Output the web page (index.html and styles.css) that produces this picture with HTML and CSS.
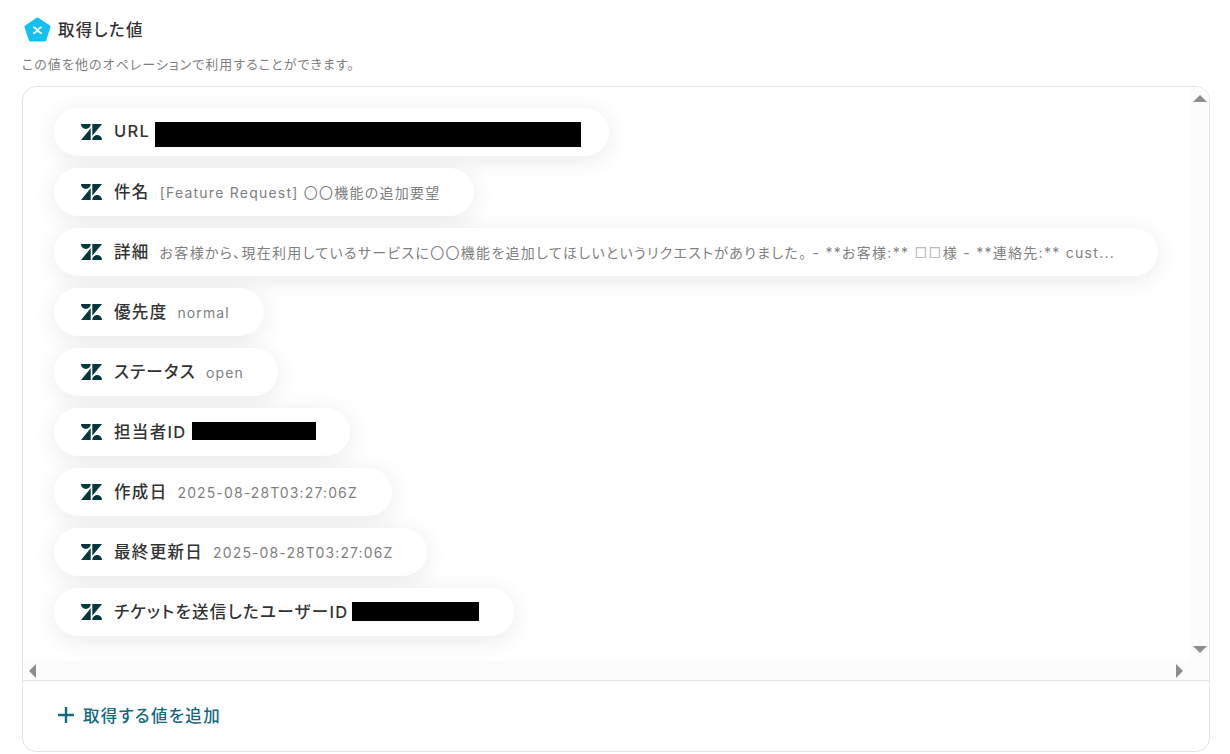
FILE: index.html
```html
<!DOCTYPE html>
<html lang="ja">
<head>
  <meta charset="UTF-8" />
  <title>取得した値</title>
  <link rel="stylesheet" href="styles.css">
</head>
<body>
  <svg class="defs" width="0" height="0">
    <symbol id="zd" viewBox="0 2.9 24 18.2">
      <path d="M12.914 2.904V16.29L24 2.905H12.914zM0 2.906C0 5.966 2.483 8.45 5.543 8.45s5.542-2.484 5.543-5.544H0zm11.086 4.807L0 21.096h11.086V7.713zm7.37 7.84c-3.063 0-5.542 2.48-5.542 5.543H24c0-3.06-2.48-5.543-5.543-5.543z"/>
    </symbol>
  </svg>

  <div class="heading">
    <svg class="logo" viewBox="0 0 26 24">
      <polygon class="logo-shape" points="13,2 24,9.5 20,22 6,22 2,9.5"/>
      <path class="logo-x" d="M9.5 10 C11 10.3 12 11.5 13 12.7 C14 13.9 15 15.2 16.5 15.5 M16.5 10 C15 10.3 14 11.5 13 12.7 C12 13.9 11 15.2 9.5 15.5"/>
    </svg>
    <h2>取得した値</h2>
  </div>
  <p class="note">この値を他のオペレーションで利用することができます。</p>

  <div class="card">
    <div class="scroller">
      <div class="rows">
        <div class="chip"><svg class="zd"><use href="#zd"/></svg><span class="label">URL</span><span class="mask mask-url"></span></div>
        <div class="chip"><svg class="zd"><use href="#zd"/></svg><span class="label">件名</span><span class="value value-mixed">[Feature Request] 〇〇機能の追加要望</span></div>
        <div class="chip"><svg class="zd"><use href="#zd"/></svg><span class="label">詳細</span><span class="value value-long">お客様から、現在利用しているサービスに〇〇機能を追加してほしいというリクエストがありました。 - **お客様:** <span class="tofu">□□</span>様 - **連絡先:** cust...</span></div>
        <div class="chip"><svg class="zd"><use href="#zd"/></svg><span class="label">優先度</span><span class="value">normal</span></div>
        <div class="chip"><svg class="zd"><use href="#zd"/></svg><span class="label">ステータス</span><span class="value">open</span></div>
        <div class="chip"><svg class="zd"><use href="#zd"/></svg><span class="label">担当者ID</span><span class="mask mask-id"></span></div>
        <div class="chip"><svg class="zd"><use href="#zd"/></svg><span class="label">作成日</span><span class="value">2025-08-28T03:27:06Z</span></div>
        <div class="chip"><svg class="zd"><use href="#zd"/></svg><span class="label">最終更新日</span><span class="value">2025-08-28T03:27:06Z</span></div>
        <div class="chip"><svg class="zd"><use href="#zd"/></svg><span class="label">チケットを送信したユーザーID</span><span class="mask mask-user"></span></div>
      </div>
      <div class="vbar">
        <span class="arrow arrow-up"></span>
        <span class="arrow arrow-down"></span>
      </div>
    </div>
    <div class="hbar">
      <span class="arrow arrow-left"></span>
      <span class="arrow arrow-right"></span>
    </div>
    <div class="footer">
      <svg class="plus" viewBox="0 0 16 16"><path d="M8 0v16M0 8h16"/></svg>
      <span>取得する値を追加</span>
    </div>
  </div>
</body>
</html>
```

FILE: styles.css
```css
* {
  box-sizing: border-box;
  font-family: Inter, 'Noto Sans CJK JP', sans-serif;
  font-feature-settings: "palt";
}

body {
  background: white;
  margin: 0;
  padding: 16px 20px 0 22px;
  height: 754px;
  overflow: hidden;
}

.defs {
  display: block;
}

.heading {
  display: flex;
  align-items: center;
  gap: 7px;
  height: 26px;
  padding-left: 2px;
}

.logo {
  width: 27px;
  height: 25px;
}

.logo-shape {
  fill: #14c0f1;
  stroke: #14c0f1;
  stroke-width: 3;
  stroke-linejoin: round;
}

.logo-x {
  fill: none;
  stroke: white;
  stroke-width: 1.8;
  stroke-linecap: round;
}

h2 {
  margin: 0;
  font-size: 16.5px;
  font-weight: 500;
  letter-spacing: 0.08em;
  color: #333;
}

.note {
  margin: 13px 0 13px;
  font-size: 13px;
  line-height: 18px;
  letter-spacing: 0.08em;
  color: #808080;
}

.card {
  height: 666px;
  border: 1px solid #e4e4e4;
  border-radius: 14px;
  overflow: hidden;
}

.scroller {
  display: flex;
  height: 574px;
}

.rows {
  flex: 1;
  display: flex;
  flex-direction: column;
  align-items: flex-start;
  gap: 12px;
  padding: 21px 0 0 31px;
}

.chip {
  display: flex;
  align-items: center;
  height: 48px;
  padding: 0 34px 0 27px;
  background: white;
  border-radius: 24px;
  box-shadow: 0 4px 24px rgba(0,0,0,0.09);
  white-space: nowrap;
}

.zd {
  width: 21px;
  height: 16px;
  margin-right: 12px;
  fill: #03363d;
}

.label {
  margin-bottom: 2px;
  font-size: 16.5px;
  font-weight: 500;
  letter-spacing: 0.08em;
  color: #333;
}

.value {
  margin-left: 10px;
  font-size: 14px;
  letter-spacing: 0.08em;
  color: #808080;
}

.value-mixed {
  letter-spacing: 0.088em;
}

.value-long {
  margin-right: 9px;
  letter-spacing: 0.092em;
}

.tofu {
  color: #bbb;
}

.mask {
  background: black;
}

.mask-url {
  width: 426px;
  height: 25px;
  margin: 5px -6px 0 5px;
}

.mask-id {
  width: 124px;
  height: 18px;
  margin: 0 0 2px 5px;
}

.mask-user {
  width: 127px;
  height: 19px;
  margin: 0 1px 1px 4px;
}

.vbar {
  width: 19px;
  display: flex;
  flex-direction: column;
  justify-content: space-between;
  align-items: center;
  padding: 8px 0;
  background: #fcfcfc;
}

.hbar {
  display: flex;
  justify-content: space-between;
  align-items: center;
  height: 19px;
  padding: 0 26px 0 6px;
  background: #fcfcfc;
}

.arrow {
  width: 0;
  height: 0;
  border-style: solid;
  border-color: transparent;
}

.arrow-up {
  border-width: 0 7px 7px;
  border-bottom-color: #8c8c8c;
}

.arrow-down {
  border-width: 7px 7px 0;
  border-top-color: #8c8c8c;
}

.arrow-left {
  border-width: 7px 7px 7px 0;
  border-right-color: #8c8c8c;
}

.arrow-right {
  border-width: 7px 0 7px 7px;
  border-left-color: #8c8c8c;
}

.footer {
  display: flex;
  align-items: center;
  gap: 9px;
  height: 71px;
  padding: 0 0 2px 35px;
  border-top: 1px solid #e4e4e4;
  font-size: 16.5px;
  font-weight: 500;
  letter-spacing: 0.08em;
  color: #14697f;
}

.plus {
  width: 16px;
  height: 16px;
  fill: none;
  stroke: #14697f;
  stroke-width: 2.4;
}
```
